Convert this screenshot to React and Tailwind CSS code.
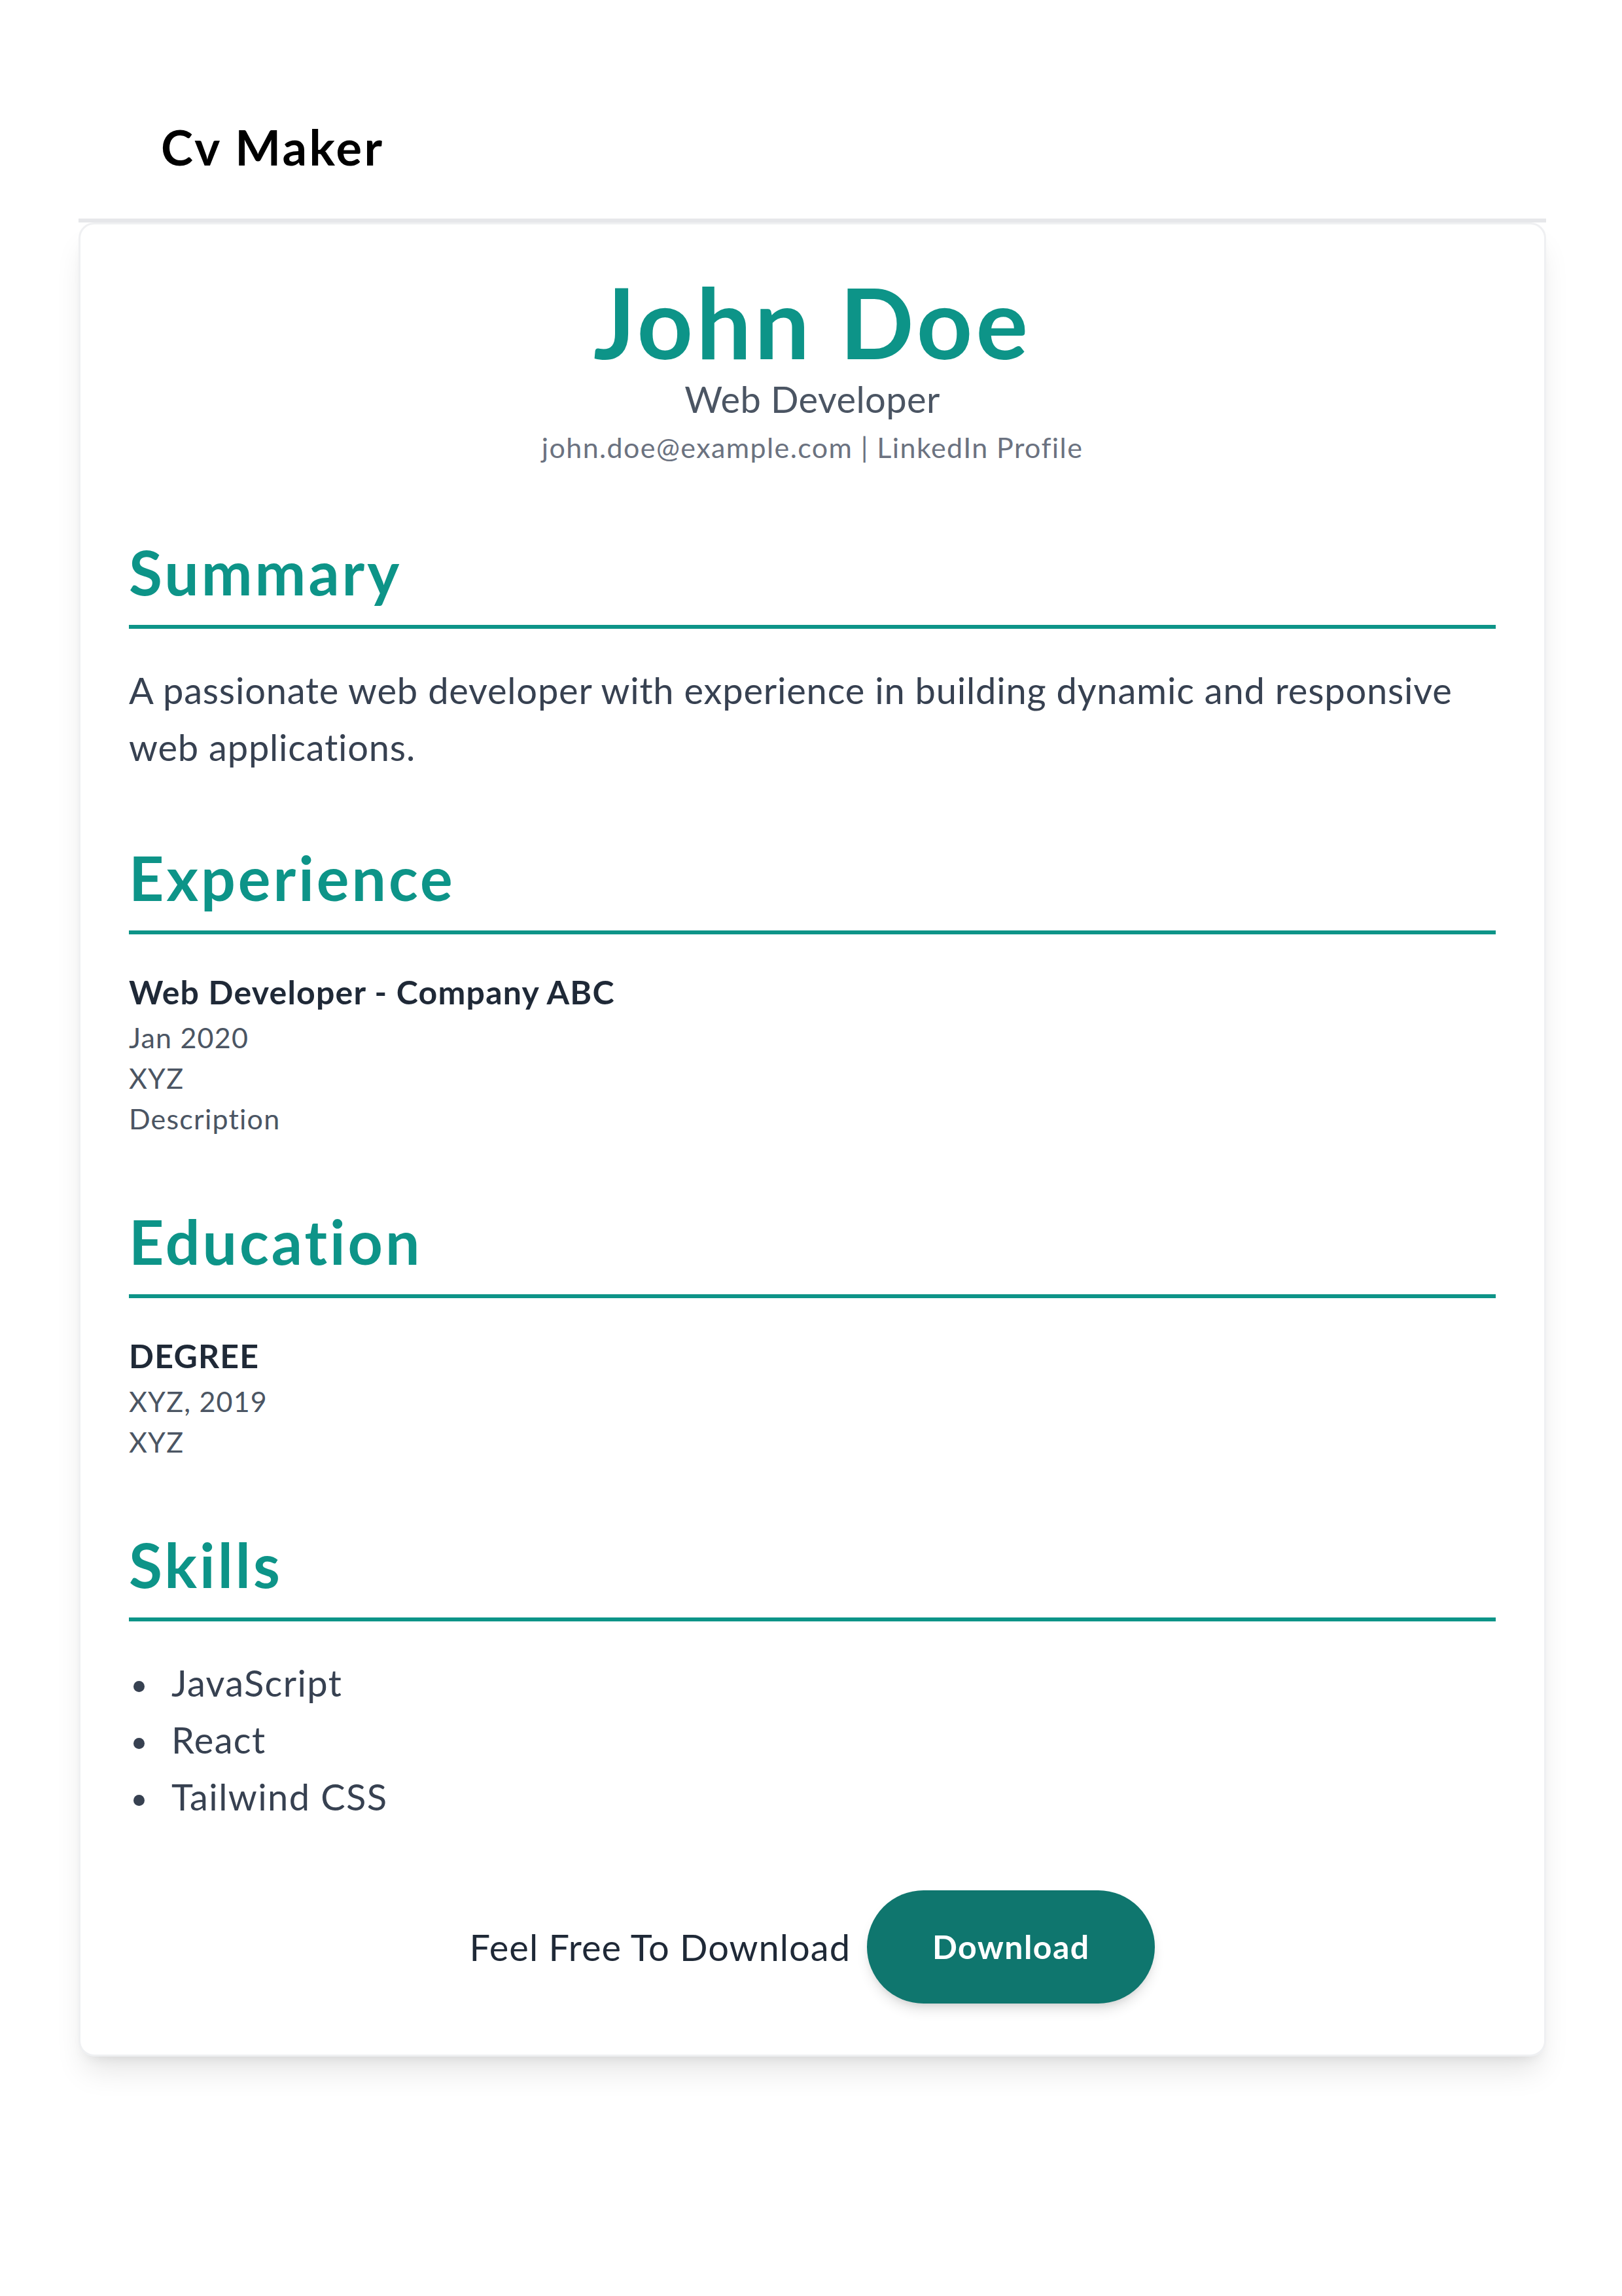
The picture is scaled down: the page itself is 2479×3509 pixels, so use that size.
const experience = [
  { title: 'Web Developer - Company ABC', date: 'Jan 2020', place: 'XYZ', desc: 'Description' },
];

const education = [{ degree: 'DEGREE', info: 'XYZ, 2019', place: 'XYZ' }];

const skills = ['JavaScript', 'React', 'Tailwind CSS'];

function Section({ title, children }) {
  return (
    <section className="mb-[100px]">
      <h2 className="border-b-[6px] border-[#0d9488] pb-[25px] text-[93px] font-bold leading-[112px] tracking-[4px] text-[#0d9488]">
        {title}
      </h2>
      <div className="mt-[50px]">{children}</div>
    </section>
  );
}

export default function App() {
  return (
    <div className="min-h-[3509px] bg-white pl-[120px] pr-[116px] font-[Lato,sans-serif]">
      {/* Top bar */}
      <header className="border-b-[6px] border-[#e6e7ea] pb-[60px] pl-[126px] pt-[175px]">
        <h1 className="text-[74px] font-bold leading-[99px] tracking-[3.4px] text-black">Cv Maker</h1>
      </header>

      {/* CV card */}
      <main className="rounded-[24px] border-[3px] border-[#eff0f2] bg-white p-[74px] pb-[78px] shadow-[0_31px_46px_-9px_rgba(0,0,0,0.1),0_12px_19px_-12px_rgba(0,0,0,0.1)]">
        <div className="mb-[103px] text-center">
          <h1 className="text-[149px] font-bold leading-[149px] tracking-[5px] text-[#0d9488]">John Doe</h1>
          <p className="text-[56px] leading-[87px] tracking-[0.4px] text-[#4b5563]">Web Developer</p>
          <p className="text-[43px] leading-[62px] tracking-[1.4px] text-[#6b7280]">
            john.doe@example.com | LinkedIn Profile
          </p>
        </div>

        <Section title="Summary">
          <p className="text-[56px] leading-[87px] tracking-[0.8px] text-[#374151]">
            A passionate web developer with experience in building dynamic and responsive web
            applications.
          </p>
        </Section>

        <Section title="Experience">
          {experience.map((job) => (
            <div key={job.title} className="text-[43px] leading-[62px] tracking-[1.2px] text-[#4b5563]">
              <h3 className="text-[50px] font-bold leading-[77px] text-[#1f2937]">{job.title}</h3>
              <p>{job.date}</p>
              <p>{job.place}</p>
              <p>{job.desc}</p>
            </div>
          ))}
        </Section>

        <Section title="Education">
          {education.map((ed) => (
            <div key={ed.degree} className="text-[43px] leading-[62px] tracking-[1.2px] text-[#4b5563]">
              <h3 className="text-[50px] font-bold leading-[77px] text-[#1f2937]">{ed.degree}</h3>
              <p>{ed.info}</p>
              <p>{ed.place}</p>
            </div>
          ))}
        </Section>

        <Section title="Skills">
          <ul className="text-[56px] leading-[87px] tracking-[1.4px] text-[#374151]">
            {skills.map((s) => (
              <li key={s} className="flex">
                <span className="ml-[7px] mr-[41px] mt-[41px] h-[17px] w-[17px] shrink-0 rounded-full bg-[#374151]" />
                <span>{s}</span>
              </li>
            ))}
          </ul>
        </Section>

        {/* Download row */}
        <div className="mt-[4px] flex items-center justify-center gap-[25px]">
          <span className="text-[56px] leading-[87px] tracking-[1px] text-[#1f2937]">Feel Free To Download</span>
          <button className="rounded-full bg-[#0f766e] px-[100px] py-[48px] text-[50px] font-bold leading-[77px] tracking-[1.4px] text-white shadow-[0_12px_19px_-3px_rgba(0,0,0,0.12),0_6px_12px_-6px_rgba(0,0,0,0.12)]">
            Download
          </button>
        </div>
      </main>
    </div>
  );
}
